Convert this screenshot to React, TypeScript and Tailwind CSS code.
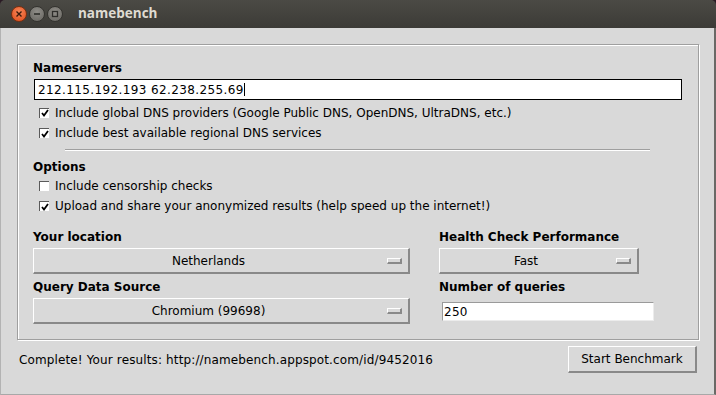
import React from "react";

const font = { fontFamily: '"DejaVu Sans", "Liberation Sans", sans-serif' };

function Check({ checked, label }: { checked: boolean; label: string }) {
  return (
    <div className="flex items-center pl-[6px]">
      <div className="w-[10px] h-[10px] bg-white border-t border-l border-[#5a5a5a] flex items-center justify-center">
        {checked && (
          <svg width="8" height="8" viewBox="0 0 8 8">
            <path d="M1 4 L3 6.5 L7 1" stroke="#000" strokeWidth="1.8" fill="none" />
          </svg>
        )}
      </div>
      <span className="ml-[6px] text-[12px] text-black leading-[14px]">{label}</span>
    </div>
  );
}

function Combo({ value, width }: { value: string; width: string }) {
  return (
    <div
      className={`${width} h-[26px] flex items-center bg-[#d9d9d9] border-t border-l border-t-white border-l-white border-b-2 border-r-2 border-b-[#898989] border-r-[#898989]`}
    >
      <div className="flex-1 text-center pr-[4px] text-[12px] text-black leading-[14px]">{value}</div>
      <div className="w-[15px] h-[6px] mr-[6px] bg-[#d9d9d9] border-t border-l border-t-white border-l-white border-b-2 border-r-2 border-b-[#898989] border-r-[#898989]" />
    </div>
  );
}

export default function App() {
  return (
    <div className="w-[716px] h-[395px] flex flex-col bg-[#2a1a24] overflow-hidden" style={font}>
      {/* Title bar */}
      <div className="h-[28px] flex items-center rounded-t-[5px] bg-gradient-to-b from-[#4b4a45] to-[#3c3b37] pl-[11px]">
        <div className="flex items-center gap-[2px]">
          <div className="w-[16px] h-[16px] rounded-full bg-[radial-gradient(circle_at_50%_35%,#f7875a,#df4a18)] border border-[#7a2f10] flex items-center justify-center">
            <svg width="8" height="8" viewBox="0 0 8 8">
              <path d="M1.5 1.5 L6.5 6.5 M6.5 1.5 L1.5 6.5" stroke="#3a1a0c" strokeWidth="1.4" />
            </svg>
          </div>
          <div className="w-[16px] h-[16px] rounded-full bg-[radial-gradient(circle_at_50%_35%,#8f8d88,#66645f)] border border-[#34332f] flex items-center justify-center">
            <svg width="8" height="8" viewBox="0 0 8 8">
              <path d="M1 4 L7 4" stroke="#2e2d2a" strokeWidth="1.6" />
            </svg>
          </div>
          <div className="w-[16px] h-[16px] rounded-full bg-[radial-gradient(circle_at_50%_35%,#8f8d88,#66645f)] border border-[#34332f] flex items-center justify-center">
            <svg width="8" height="8" viewBox="0 0 8 8">
              <rect x="1.5" y="1.5" width="5" height="5" stroke="#2e2d2a" strokeWidth="1.3" fill="none" />
            </svg>
          </div>
        </div>
        <span
          className="ml-[15px] text-[13.5px] font-bold text-[#dfdbd2] leading-none"
          style={{ fontFamily: '"Open Sans", "DejaVu Sans", sans-serif' }}
        >
          namebench
        </span>
      </div>

      {/* Body */}
      <div className="flex-1 flex flex-col bg-[#d9d9d9] border-l border-l-[#b3b3b3] border-r-2 border-r-[#6a6966] border-b border-b-[#a8a8a8]">
        {/* Groove frame */}
        <div className="mt-[16px] ml-[16px] w-[682px] h-[296px] border border-[#9f9f9f] shadow-[inset_1px_1px_0_#ffffff,1px_1px_0_#ffffff] pl-[15px] pt-[14px] flex flex-col">
          <div className="h-[17px] flex items-center text-[12px] font-bold text-black">Nameservers</div>
          <div className="mt-[3px] ml-[1px] w-[648px] h-[21px] bg-white border border-black flex items-center pl-[3px]">
            <span className="text-[12px] text-black leading-[14px] tracking-[0.38px]">212.115.192.193 62.238.255.69</span>
            <span className="w-[1px] h-[13px] bg-black" />
          </div>
          <div className="mt-[2px] h-[21px] flex items-center">
            <Check checked label="Include global DNS providers (Google Public DNS, OpenDNS, UltraDNS, etc.)" />
          </div>
          <div className="h-[20px] flex items-center">
            <Check checked label="Include best available regional DNS services" />
          </div>
          <div className="mt-[6px] ml-[32px] w-[585px] border-t border-t-[#9f9f9f] border-b border-b-white" />
          <div className="mt-[7px] h-[17px] flex items-center text-[12px] font-bold text-black">Options</div>
          <div className="h-[21px] flex items-center">
            <Check checked={false} label="Include censorship checks" />
          </div>
          <div className="h-[20px] flex items-center">
            <Check checked label="Upload and share your anonymized results (help speed up the internet!)" />
          </div>

          <div className="mt-[12px] flex gap-[29px]">
            <div className="w-[377px] flex flex-col">
              <div className="h-[17px] flex items-center text-[12px] font-bold text-black">Your location</div>
              <div className="mt-[3px]">
                <Combo value="Netherlands" width="w-[377px]" />
              </div>
              <div className="mt-[4px] h-[17px] flex items-center text-[12px] font-bold text-black">Query Data Source</div>
              <div className="mt-[3px]">
                <Combo value="Chromium (99698)" width="w-[377px]" />
              </div>
            </div>
            <div className="w-[216px] flex flex-col">
              <div className="h-[17px] flex items-center text-[12px] font-bold text-black">Health Check Performance</div>
              <div className="mt-[3px]">
                <Combo value="Fast" width="w-[200px]" />
              </div>
              <div className="mt-[4px] h-[17px] flex items-center text-[12px] font-bold text-black">Number of queries</div>
              <div className="mt-[7px] ml-[3px] w-[212px] h-[19px] bg-white border-t border-l border-t-[#9a9a9a] border-l-[#9a9a9a] border-b border-r border-b-[#ececec] border-r-[#ececec] flex items-center pl-[1px]">
                <span className="text-[12px] text-black leading-[14px] tracking-[0.3px]">250</span>
              </div>
            </div>
          </div>
        </div>

        {/* Bottom row */}
        <div className="mt-[6px] flex items-center justify-between pl-[18px] pr-[17px]">
          <span className="text-[12px] text-black leading-[14px] tracking-[0.13px]">
            Complete! Your results: http://namebench.appspot.com/id/9452016
          </span>
          <div className="w-[129px] h-[27px] flex items-center justify-center bg-[#d9d9d9] border-t border-l border-t-white border-l-white border-b-2 border-r-2 border-b-[#898989] border-r-[#898989] text-[12px] text-black leading-[14px]">
            Start Benchmark
          </div>
        </div>
      </div>
    </div>
  );
}
